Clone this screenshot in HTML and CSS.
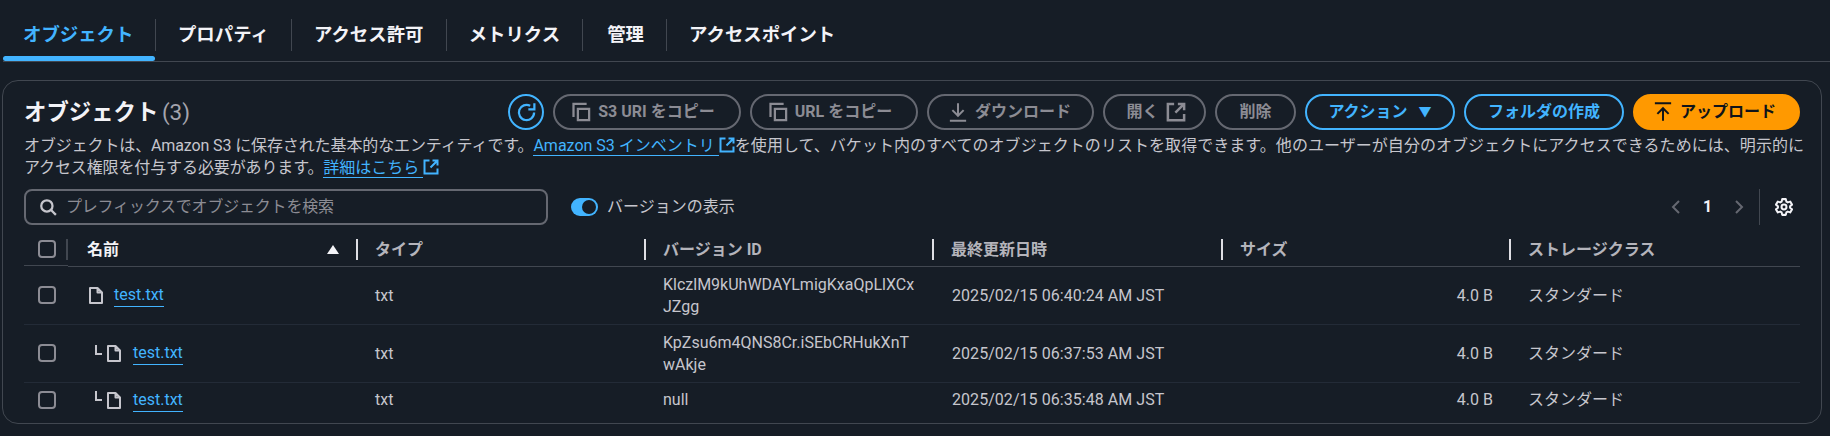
FILE: index.html
```html
<!DOCTYPE html>
<html lang="ja">
<head>
<meta charset="utf-8">
<title>オブジェクト</title>
<link rel="stylesheet" href="styles.css">
</head>
<body>
<svg class="defs" width="0" height="0" aria-hidden="true">
  <symbol id="i-copy" viewBox="0 0 16 16"><path d="M2 12V1.500h10.500" fill="none" stroke="currentColor" stroke-width="1.800"/><rect x="5.500" y="5.500" width="9" height="9" fill="none" stroke="currentColor" stroke-width="1.800"/></symbol>
  <symbol id="i-ext" viewBox="0 0 16 16"><path d="M14.500 9.500v5h-13v-13h5M9.500 1.500h5v5M14.500 1.500 7.500 8.500" fill="none" stroke="currentColor" stroke-width="2"/></symbol>
  <symbol id="i-file" viewBox="0 0 14 17"><path d="M8.500 1h-7.500v15h12V5.500zM8.500 1v4.500h4.500" fill="none" stroke="currentColor" stroke-width="2" stroke-linejoin="round"/></symbol>
</svg>

<nav class="tabs">
  <a class="tab active">オブジェクト</a>
  <a class="tab">プロパティ</a>
  <a class="tab">アクセス許可</a>
  <a class="tab">メトリクス</a>
  <a class="tab mgmt">管理</a>
  <a class="tab last">アクセスポイント</a>
</nav>

<section class="panel">
  <header class="head">
    <h1 class="title">オブジェクト <span class="count">(3)</span></h1>
    <div class="actions">
      <button class="round"><svg viewBox="0 0 16 16" width="21" height="21"><path d="M13.800 8A5.800 5.800 0 1 1 10.800 2.900" fill="none" stroke="currentColor" stroke-width="1.700"/><path d="M14 1v4.600H9.400" fill="none" stroke="currentColor" stroke-width="1.700"/></svg></button>
      <button class="btn off w1"><svg class="ic"><use href="#i-copy"/></svg>S3 URI をコピー</button>
      <button class="btn off w2"><svg class="ic"><use href="#i-copy"/></svg>URL をコピー</button>
      <button class="btn off w3"><svg class="ic" viewBox="0 0 16 16"><path d="M8 1v9.500M3.500 6.500 8 11l4.500-4.500M1.500 15h13" fill="none" stroke="currentColor" stroke-width="1.600"/></svg>ダウンロード</button>
      <button class="btn off w4">開く<svg class="ic"><use href="#i-ext"/></svg></button>
      <button class="btn off w5">削除</button>
      <button class="btn blue w6">アクション<span class="caret">▼</span></button>
      <button class="btn blue w7">フォルダの作成</button>
      <button class="btn primary w8"><svg class="ic" viewBox="0 0 16 16"><path d="M1.500 1h13M8 15V5.500M3.500 9.500 8 5l4.500 4.500" fill="none" stroke="currentColor" stroke-width="1.600"/></svg>アップロード</button>
    </div>
  </header>

  <p class="desc"><span class="tight">オブジェクトは、Amazon S3 に保存された基本的なエンティティです。</span><a class="link">Amazon S3 インベントリ </a><svg class="ext"><use href="#i-ext"/></svg><span class="loose">を使用して、バケット内のすべてのオブジェクトのリストを取得できます。他のユーザーが自分のオブジェクトにアクセスできるためには、明示的に</span><br><span class="tight">アクセス権限を付与する必要があります。</span><a class="link">詳細はこちら </a><svg class="ext"><use href="#i-ext"/></svg></p>

  <div class="filters">
    <label class="search">
      <svg class="search-ic" viewBox="0 0 16 16" width="18" height="18"><circle cx="7" cy="7" r="5" fill="none" stroke="currentColor" stroke-width="2"/><path d="m10.500 10.500 4.500 4.500" fill="none" stroke="currentColor" stroke-width="2"/></svg>
      <span class="placeholder">プレフィックスでオブジェクトを検索</span>
    </label>
    <span class="toggle"><i class="knob"></i></span>
    <span class="toggle-label">バージョンの表示</span>
    <div class="pager">
      <svg class="chev" viewBox="0 0 10 16" width="10" height="16"><path d="M8 2 2 8l6 6" fill="none" stroke="currentColor" stroke-width="2"/></svg>
      <b class="page">1</b>
      <svg class="chev" viewBox="0 0 10 16" width="10" height="16"><path d="m2 2 6 6-6 6" fill="none" stroke="currentColor" stroke-width="2"/></svg>
      <span class="vsep"></span>
      <svg class="gear" viewBox="0 0 16 16" width="18" height="18"><path d="M6.400 1h3.200l.5 2.200 1.200.7 2.200-.7 1.600 2.700-1.700 1.500v1.200l1.700 1.500-1.600 2.700-2.200-.7-1.200.7L9.600 15H6.400l-.5-2.200-1.200-.7-2.200.7-1.600-2.700 1.700-1.500V7.400L.9 5.900l1.600-2.700 2.200.7 1.200-.7z" fill="none" stroke="currentColor" stroke-width="1.800" stroke-linejoin="round"/><circle cx="8" cy="8" r="2.200" fill="none" stroke="currentColor" stroke-width="1.800"/></svg>
    </div>
  </div>

  <table class="grid">
    <colgroup>
      <col class="c-sel"><col class="c-wide"><col class="c-wide"><col class="c-wide"><col class="c-date"><col class="c-wide"><col>
    </colgroup>
    <thead>
      <tr>
        <th class="sel"><span class="check"></span><span class="sel-sep"></span></th>
        <th class="name-h"><div class="th-in first">名前<span class="sort"></span></div></th>
        <th><div class="th-in">タイプ</div></th>
        <th><div class="th-in">バージョン ID</div></th>
        <th><div class="th-in">最終更新日時</div></th>
        <th><div class="th-in">サイズ</div></th>
        <th><div class="th-in">ストレージクラス</div></th>
      </tr>
    </thead>
    <tbody>
      <tr>
        <td class="sel"><span class="check"></span></td>
        <td class="name"><span class="obj"><svg class="file"><use href="#i-file"/></svg><a class="link">test.txt</a></span></td>
        <td>txt</td>
        <td class="ver">KlczlM9kUhWDAYLmigKxaQpLlXCxJZgg</td>
        <td class="date">2025/02/15 06:40:24 AM JST</td>
        <td class="size">4.0 B</td>
        <td>スタンダード</td>
      </tr>
      <tr>
        <td class="sel"><span class="check"></span></td>
        <td class="name"><span class="obj sub"><i class="elbow"></i><svg class="file"><use href="#i-file"/></svg><a class="link">test.txt</a></span></td>
        <td>txt</td>
        <td class="ver">KpZsu6m4QNS8Cr.iSEbCRHukXnTwAkje</td>
        <td class="date">2025/02/15 06:37:53 AM JST</td>
        <td class="size">4.0 B</td>
        <td>スタンダード</td>
      </tr>
      <tr>
        <td class="sel"><span class="check"></span></td>
        <td class="name"><span class="obj sub"><i class="elbow"></i><svg class="file"><use href="#i-file"/></svg><a class="link">test.txt</a></span></td>
        <td>txt</td>
        <td class="ver">null</td>
        <td class="date">2025/02/15 06:35:48 AM JST</td>
        <td class="size">4.0 B</td>
        <td>スタンダード</td>
      </tr>
    </tbody>
  </table>
</section>
</body>
</html>
```

FILE: styles.css
```css
* { box-sizing: border-box; }
html, body { margin: 0; padding: 0; }
body {
  width: 1830px;
  height: 436px;
  overflow: hidden;
  background: #161d26;
  color: #c6c6cd;
  font-family: Roboto, "Noto Sans CJK JP", sans-serif;
  font-size: 16px;
  line-height: 22px;
}
.defs { position: absolute; }

.tabs {
  display: flex;
  align-items: flex-start;
  height: 62px;
  margin: 0 0 0 3px;
  padding-top: 19px;
  border-bottom: 1px solid #414750;
}
.tab {
  position: relative;
  display: flex;
  align-items: center;
  height: 32px;
  padding: 0 22.2px 0 22px;
  border-right: 1px solid #414750;
  font-size: 18.4px;
  font-weight: 700;
  color: #f3f3f7;
}
.tab.last { border-right: 0; }
.tab.mgmt { padding: 0 22px 0 24px; }
.tab.active { padding: 0 21.6px 0 20px; color: #42b4ff; }
.tab.active::after {
  content: "";
  position: absolute;
  left: 0;
  right: 0;
  top: 37px;
  height: 5px;
  border-radius: 3px;
  background: #42b4ff;
}

.panel {
  margin: 18px 8px 0 2px;
  height: 344px;
  padding: 13px 21px 0 21px;
  border: 1px solid #414750;
  border-radius: 16px;
}
.head { display: flex; justify-content: space-between; align-items: center; height: 36px; }
.title { margin: 0; font-size: 22.4px; line-height: 30px; font-weight: 700; color: #f3f3f7; }
.count { margin-left: -2px; font-weight: 400; color: #a4a4ad; }
.actions { display: flex; gap: 9px; align-items: center; }

.btn, .round {
  display: flex;
  align-items: center;
  justify-content: center;
  height: 36px;
  padding: 0;
  border: 2px solid;
  border-radius: 18px;
  background: none;
  font: 700 16px/22px Roboto, "Noto Sans CJK JP", sans-serif;
  white-space: nowrap;
}
.round { width: 36px; border-color: #42b4ff; color: #42b4ff; }
.btn.off { border-color: #656871; color: #8c8c94; }
.btn.blue { border-color: #42b4ff; color: #42b4ff; }
.btn.primary { border-color: #ff9900; background: #ff9900; color: #0f141a; }
.ic { width: 20px; height: 20px; margin-right: 7px; flex: none; }
.w1 { width: 188px; padding-right: 8px; }
.w2 { width: 168px; padding-right: 8px; }
.w3 { width: 167px; padding-right: 2px; }
.w4 { width: 103px; padding-left: 3px; }
.w4 .ic { margin: 0 0 0 7px; }
.w5 { width: 81px; }
.w6 { width: 150px; }
.w7 { width: 160px; }
.w8 { width: 167px; padding-right: 4px; }
.caret { margin-left: 11px; font-size: 13px; }

.desc { margin: 5px 0 0; white-space: nowrap; }
.tight { letter-spacing: -0.12px; }
.loose { letter-spacing: 0.05px; }
.link { color: #42b4ff; border-bottom: 1px solid #42b4ff; }
.ext { display: inline-block; width: 16px; height: 16px; color: #42b4ff; vertical-align: -2px; }

.filters { display: flex; align-items: center; height: 36px; margin-top: 10px; }
.search {
  display: flex;
  align-items: center;
  width: 524px;
  height: 36px;
  padding-left: 13px;
  border: 2px solid #656871;
  border-radius: 8px;
}
.search-ic { color: #c6c6cd; margin-right: 9px; }
.placeholder { color: #8c8c94; letter-spacing: -0.2px; }
.toggle {
  position: relative;
  width: 27px;
  height: 18px;
  margin: 0 9px 0 23px;
  border-radius: 9px;
  background: #42b4ff;
}
.knob {
  position: absolute;
  right: 2px;
  top: 2px;
  width: 14px;
  height: 14px;
  border-radius: 50%;
  background: #161d26;
}
.toggle-label { color: #c6c6cd; }
.pager { display: flex; align-items: center; margin-left: auto; height: 36px; margin-right: 7px; }
.chev { color: #656871; }
.page { width: 53px; text-align: center; color: #f3f3f7; font-size: 16px; }
.vsep { width: 1px; height: 36px; margin: 0 15px 0 15px; background: #414750; }
.gear { color: #f3f3f7; }

.grid {
  width: 1776px;
  margin-top: 14px;
  border-collapse: collapse;
  table-layout: fixed;
}
.c-sel { width: 44px; }
.c-wide { width: 288px; }
.c-date { width: 289px; }
th {
  height: 27px;
  padding: 0 0 5px;
  border-bottom: 1px solid #414750;
  text-align: left;
  font-weight: 700;
  color: #b4b4bb;
  vertical-align: top;
}
.th-in {
  display: flex;
  align-items: center;
  height: 21px;
  padding-left: 17px;
  border-left: 2px solid #dedee3;
}
.name-h { color: #f3f3f7; }
.th-in.first { padding-left: 19px; padding-right: 17px; border-left: 0; justify-content: space-between; }
.sort {
  width: 0;
  height: 0;
  border-left: 6px solid transparent;
  border-right: 6px solid transparent;
  border-bottom: 9px solid #f3f3f7;
}
th.sel { padding-left: 14px; display: flex; align-items: flex-start; justify-content: space-between; }
th .check { margin-top: 1px; }
.sel-sep { display: block; width: 2px; height: 21px; background: #414750; }
.check {
  display: block;
  width: 18px;
  height: 18px;
  border: 2px solid #8c8c94;
  border-radius: 4px;
}
td {
  padding: 7px 16px 6px 19px;
  border-bottom: 1px solid #232b37;
  overflow-wrap: anywhere;
}
tbody tr:last-child td { padding-top: 6px; padding-bottom: 8px; border-bottom: 0; }
td.sel { padding: 0 0 0 14px; }
.name { padding-left: 21px; }
.date { padding-left: 20px; letter-spacing: 0.05px; }
.obj { display: flex; align-items: center; }
.file { width: 14px; height: 17px; margin-right: 11px; color: #c6c6cd; }
.sub { padding-left: 6px; }
.sub .file { margin-left: 5px; margin-right: 12px; }
.elbow { width: 7px; height: 10px; margin-top: -8px; border-left: 2px solid #c6c6cd; border-bottom: 2px solid #c6c6cd; }
.size { text-align: right; }
```
